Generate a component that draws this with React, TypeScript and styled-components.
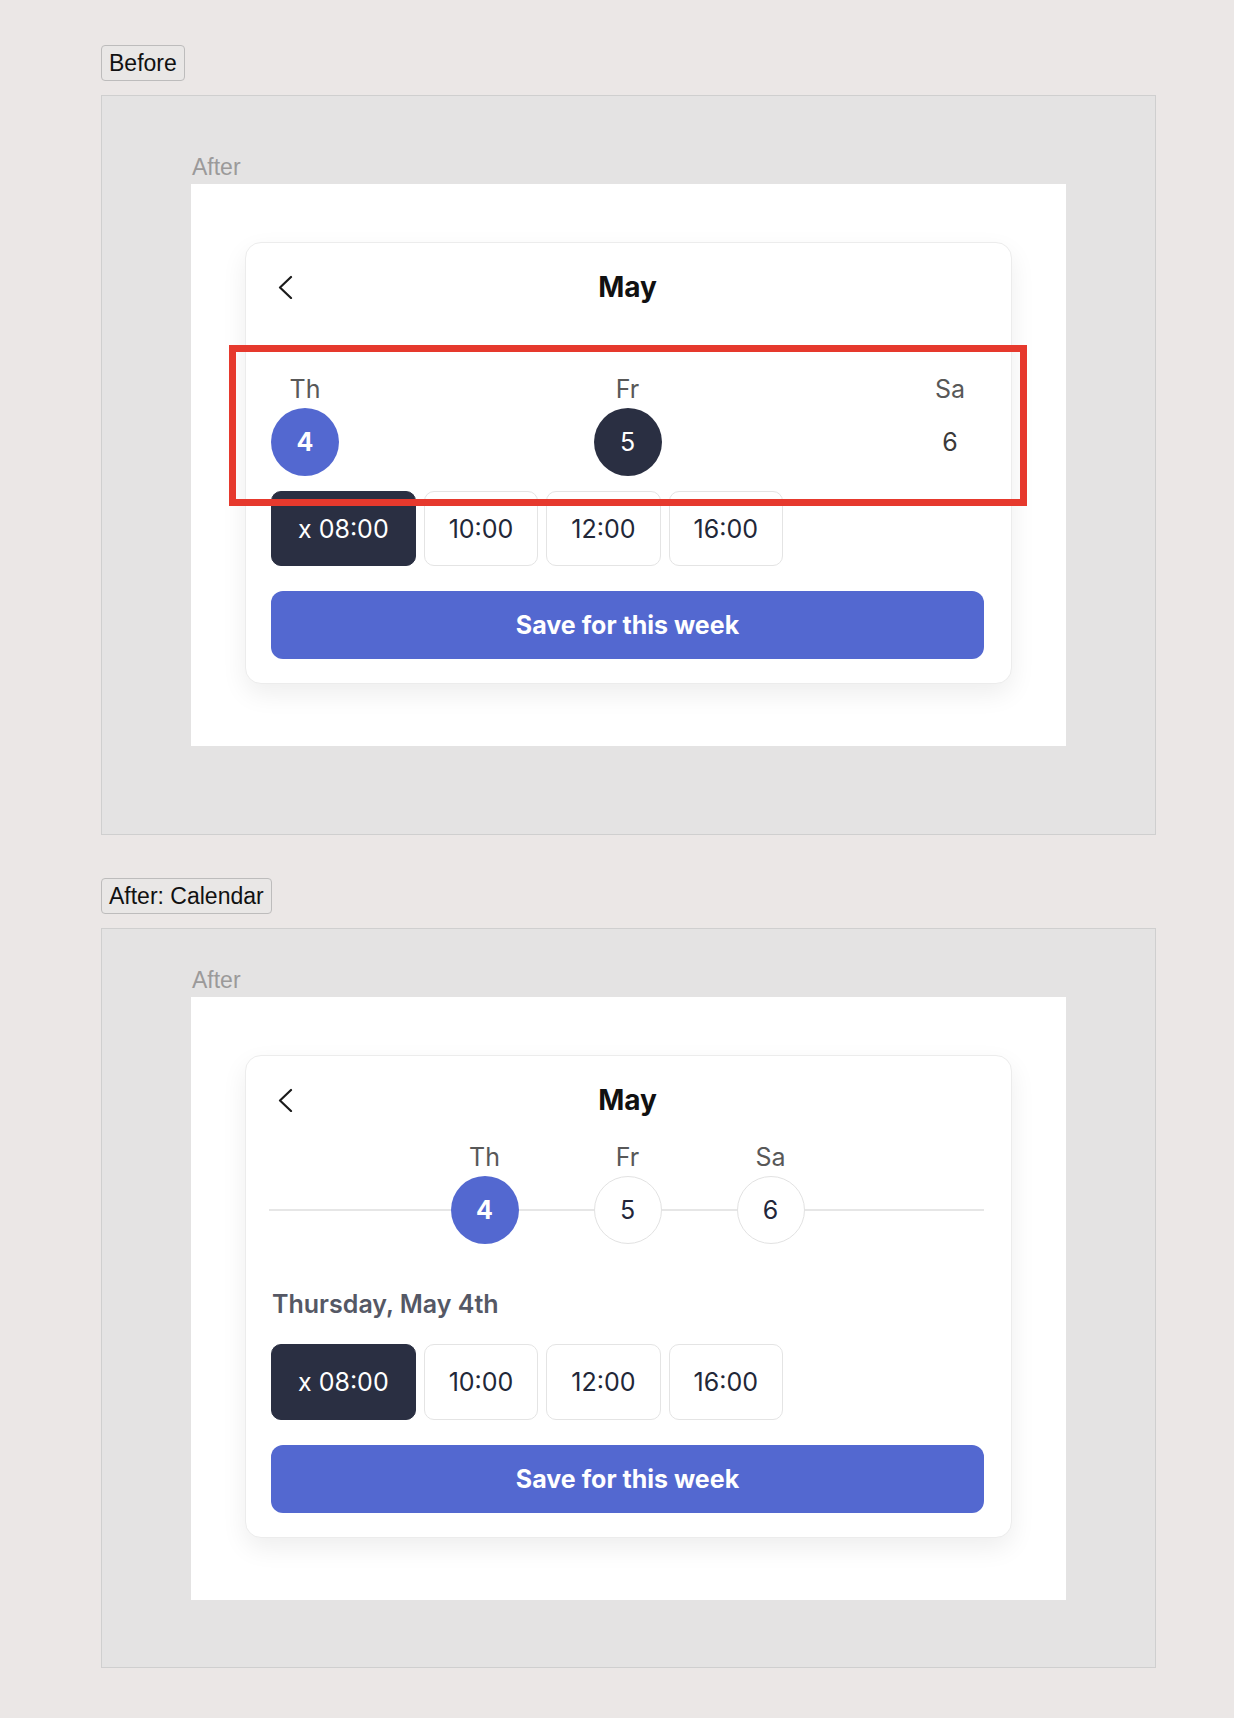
import React from 'react';
import styled, {createGlobalStyle, css} from "styled-components";

const GlobalStyle = createGlobalStyle`
  body {
    margin: 0;
    padding: 45px 0 40px 101px;
    background-color: #ebe7e6;
    font-family: "Liberation Sans", Arial, sans-serif;
  }
`

type Tone = 'accent' | 'dark' | 'plain' | 'outline'

type Day = { label: string, date: number, tone: Tone }

const beforeDays: Day[] = [
    {label: 'Th', date: 4, tone: 'accent'},
    {label: 'Fr', date: 5, tone: 'dark'},
    {label: 'Sa', date: 6, tone: 'plain'},
]

const afterDays: Day[] = [
    {label: 'Th', date: 4, tone: 'accent'},
    {label: 'Fr', date: 5, tone: 'outline'},
    {label: 'Sa', date: 6, tone: 'outline'},
]

const times = ['x 08:00', '10:00', '12:00', '16:00']

const BackIcon = () => (
    <svg width="16" height="24" viewBox="0 0 16 24" fill="none">
        <polyline points="13,2 2,12.5 13,23" stroke="#1b1b1b" strokeWidth="2.2" strokeLinecap="round" strokeLinejoin="round"/>
    </svg>
)

const CalendarCard = ({variant}: { variant: 'before' | 'after' }) => {
    const days = variant === 'before' ? beforeDays : afterDays
    return (
        <Card>
            <Header>
                <BackButton><BackIcon/></BackButton>
                <Title>May</Title>
                <span/>
            </Header>

            <DayRow variant={variant}>
                {days.map(d => (
                    <DayColumn key={d.label}>
                        <DayName>{d.label}</DayName>
                        <DateCircle tone={d.tone}>{d.date}</DateCircle>
                    </DayColumn>
                ))}
                {variant === 'before' && <Highlight/>}
            </DayRow>

            {variant === 'after' && <DateLabel>Thursday, May 4th</DateLabel>}

            <TimeList variant={variant}>
                {times.map((t, i) => (
                    <TimeButton key={t} variant={variant} selected={i === 0}>{t}</TimeButton>
                ))}
            </TimeList>

            <SaveButton>Save for this week</SaveButton>
        </Card>
    )
}

const Section = ({title, variant}: { title: string, variant: 'before' | 'after' }) => (
    <StyledSection>
        <ToggleButton>{title}</ToggleButton>
        <Panel>
            <Frame>
                <FrameLabel>After</FrameLabel>
                <WhiteBox>
                    <CalendarCard variant={variant}/>
                </WhiteBox>
            </Frame>
        </Panel>
    </StyledSection>
)

export const App = () => {
    return (
        <>
            <GlobalStyle/>
            <Section title="Before" variant="before"/>
            <Section title="After: Calendar" variant="after"/>
        </>
    );
};

export default App;

const StyledSection = styled.section`
  & + & {
    margin-top: 43px;
  }
`

const ToggleButton = styled.button`
  display: block;
  height: 36px;
  padding: 0 7px;
  margin-bottom: 14px;
  font-family: "Liberation Sans", Arial, sans-serif;
  font-size: 23px;
  color: #111;
  background-color: #e9e7e6;
  border: 1px solid #bdbcbc;
  border-radius: 4px;
`

const Panel = styled.div`
  box-sizing: border-box;
  width: 1055px;
  height: 740px;
  background-color: #e4e3e3;
  border: 1px solid #cfcfcf;
  display: grid;
  place-items: center;
`

const Frame = styled.div`
  display: flex;
  flex-direction: column;
  margin-top: -30px;
`

const FrameLabel = styled.div`
  height: 26px;
  line-height: 26px;
  margin-bottom: 4px;
  padding-left: 1px;
  font-size: 23px;
  color: #9b9a9a;
`

const WhiteBox = styled.div`
  box-sizing: border-box;
  width: 875px;
  padding: 58px 54px 62px 54px;
  background-color: #fff;
`

const Card = styled.div`
  display: flex;
  flex-direction: column;
  padding: 26px 27px 24px 25px;
  background-color: #fff;
  border: 1px solid #ececec;
  border-radius: 16px;
  box-shadow: 0 10px 26px rgba(0, 0, 0, 0.07);
  font-family: Inter, "Noto Sans", sans-serif;
`

const Header = styled.div`
  height: 36px;
  display: grid;
  grid-template-columns: 1fr auto 1fr;
  align-items: center;
`

const BackButton = styled.div`
  display: flex;
  align-items: center;
  padding-left: 7px;
`

const Title = styled.h2`
  margin: 0;
  font-size: 28px;
  font-weight: 700;
  color: #111;
`

const DayRow = styled.div<{ variant: 'before' | 'after' }>`
  position: relative;
  display: flex;

  ${({variant}) => variant === 'before' ? css`
    margin-top: 69px;
    justify-content: space-between;
  ` : css`
    margin-top: 24px;
    justify-content: center;
    gap: 75px;

    &::before {
      content: "";
      position: absolute;
      left: -2px;
      right: 0;
      bottom: 33px;
      height: 2px;
      background-color: #e6e6e6;
    }
  `}
`

const DayColumn = styled.div`
  position: relative;
  width: 68px;
  display: flex;
  flex-direction: column;
  align-items: center;
  gap: 3px;
`

const DayName = styled.span`
  font-size: 25px;
  line-height: 31px;
  color: #585858;
`

const toneStyles = {
    accent: css`
      background-color: #5368d0;
      color: #fff;
      font-weight: 700;
    `,
    dark: css`
      background-color: #2a2f42;
      color: #fff;
    `,
    plain: css`
      color: #3a3a3a;
    `,
    outline: css`
      background-color: #fff;
      border: 1.5px solid #e2e2e2;
      color: #23263a;
    `,
}

const DateCircle = styled.div<{ tone: Tone }>`
  box-sizing: border-box;
  width: 68px;
  height: 68px;
  border-radius: 50%;
  display: flex;
  align-items: center;
  justify-content: center;
  font-size: 25px;
  ${({tone}) => toneStyles[tone]}
`

const Highlight = styled.div`
  position: absolute;
  top: -29px;
  bottom: -30px;
  left: -42px;
  right: -43px;
  border: 7px solid #e6392d;
  z-index: 1;
  pointer-events: none;
`

const DateLabel = styled.h3`
  margin: 45px 0 0 1px;
  font-size: 25px;
  line-height: 30px;
  font-weight: 600;
  color: #555865;
`

const TimeList = styled.div<{ variant: 'before' | 'after' }>`
  display: flex;
  gap: 8px;
  margin-top: ${({variant}) => variant === 'before' ? '15px' : '25px'};
`

const TimeButton = styled.button<{ selected?: boolean, variant: 'before' | 'after' }>`
  box-sizing: border-box;
  height: ${({variant}) => variant === 'before' ? '75px' : '76px'};
  padding: 0 24px;
  font-family: Inter, "Noto Sans", sans-serif;
  font-size: 25px;
  color: ${({selected}) => selected ? '#fff' : '#222738'};
  background-color: ${({selected}) => selected ? '#2a2f42' : '#fff'};
  border: 1.5px solid ${({selected}) => selected ? '#2a2f42' : '#e4e4e4'};
  border-radius: 10px;
  ${({selected}) => selected && css`
    padding: 0 26px;
  `}
`

const SaveButton = styled.button`
  margin-top: 25px;
  height: 68px;
  width: 100%;
  border: none;
  border-radius: 12px;
  background-color: #5368d0;
  color: #fff;
  font-family: Inter, "Noto Sans", sans-serif;
  font-size: 25px;
  font-weight: 700;
`
